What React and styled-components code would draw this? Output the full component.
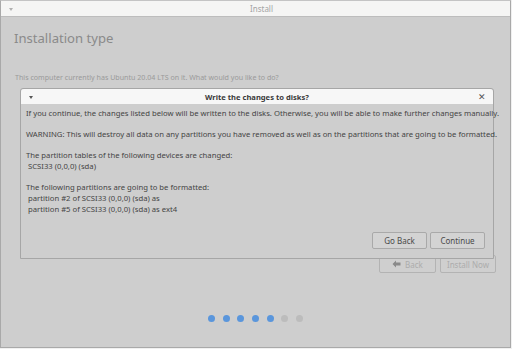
import React from "react";
import styled, { createGlobalStyle } from "styled-components";

const Global = createGlobalStyle`
  html, body { margin: 0; padding: 0; background: #f0f0f0; }
  body { font-family: "Noto Sans", "Open Sans", sans-serif; }
  #root { width: 512px; height: 349px; }
`;

const Window = styled.div`
  position: relative;
  box-sizing: border-box;
  width: 511px;
  height: 348px;
  border: 1px solid #a9a9a9;
  border-top-color: #c4c4c4;
  display: flex;
  flex-direction: column;
  background: #cecece;
  overflow: hidden;
`;

const TitleBar = styled.div`
  height: 15px;
  flex: none;
  background: #f5f5f4;
  border-bottom: 1px solid #bdbdbd;
  display: flex;
  align-items: center;
  justify-content: center;
  padding-left: 12px;
  position: relative;
  font-size: 8px;
  color: #a4a4a4;
`;

const MenuArrow = styled.span`
  position: absolute;
  left: ${(p) => p.$left}px;
  top: 50%;
  margin-top: -1px;
  width: 0;
  height: 0;
  border-left: 2.5px solid transparent;
  border-right: 2.5px solid transparent;
  border-top: 3px solid ${(p) => p.$color};
`;

const Content = styled.div`
  flex: 1;
  display: flex;
  flex-direction: column;
  padding: 0 14px 0 13px;
`;

const Heading = styled.div`
  margin-top: 12px;
  font-size: 13.1px;
  color: #8a8a8a;
  line-height: 18px;
`;

const Question = styled.div`
  margin-top: 25px;
  margin-left: 1px;
  font-size: 7.1px;
  color: #9a9a9a;
  line-height: 11px;
`;

const NavRow = styled.div`
  margin-top: 172px;
  display: flex;
  justify-content: flex-end;
  gap: 4px;
`;

const NavButton = styled.div`
  box-sizing: border-box;
  width: ${(p) => p.$w}px;
  height: 18px;
  border: 1px solid #b3b3b3;
  border-radius: 2px;
  background: #cfcfcf;
  color: #acacac;
  font-size: 8px;
  display: flex;
  align-items: center;
  justify-content: center;
  gap: 4px;
`;

const Dots = styled.div`
  margin-top: 42px;
  display: flex;
  justify-content: center;
  gap: 7.7px;
  padding-left: 1px;
`;

const Dot = styled.span`
  width: 7px;
  height: 7px;
  border-radius: 50%;
  background: ${(p) => (p.$on ? "#5a96dc" : "#bcbcbc")};
`;

const Dialog = styled.div`
  position: absolute;
  left: 19px;
  top: 87px;
  width: 474px;
  height: 171px;
  box-sizing: border-box;
  border: 1px solid #a6a6a6;
  border-radius: 3px 3px 0 0;
  background: #cecece;
  display: flex;
  flex-direction: column;
`;

const DialogHeader = styled.div`
  height: 15px;
  flex: none;
  background: #f7f7f7;
  border-radius: 3px 3px 0 0;
  display: flex;
  align-items: center;
  justify-content: center;
  position: relative;
  font-size: 7.6px;
  font-weight: bold;
  color: #3a3a3a;
`;

const Close = styled.span`
  position: absolute;
  right: 7px;
  top: 0;
  line-height: 15px;
  font-size: 9px;
  font-weight: normal;
  color: #555;
`;

const DialogBody = styled.div`
  flex: 1;
  padding: 4px 5px 0 5px;
  font-size: 7.7px;
  line-height: 11px;
  color: #444444;
  display: flex;
  flex-direction: column;
`;

const Para = styled.div`
  margin-bottom: 10px;
  white-space: pre;
`;

const DialogButtons = styled.div`
  margin-top: auto;
  margin-bottom: 9px;
  display: flex;
  justify-content: flex-end;
  gap: 3px;
  padding-right: 3px;
`;

const DialogButton = styled.div`
  box-sizing: border-box;
  width: 55px;
  height: 17px;
  border: 1px solid #a9a9a9;
  border-radius: 2px;
  background: #d3d3d3;
  color: #4a4a4a;
  font-size: 8px;
  display: flex;
  align-items: center;
  justify-content: center;
`;

const BackArrow = () => (
  <svg width="9" height="8" viewBox="0 0 9 8">
    <path d="M0.5 4 L4 0.5 L4 2.5 L8.5 2.5 L8.5 5.5 L4 5.5 L4 7.5 Z" fill="#8a8a8a" />
  </svg>
);

export default function App() {
  const dots = [true, true, true, true, true, false, false];
  return (
    <>
      <Global />
      <Window>
        <TitleBar>
          <MenuArrow $left={8} $color="#b0b0b0" />
          Install
        </TitleBar>
        <Content>
          <Heading>Installation type</Heading>
          <Question>
            This computer currently has Ubuntu 20.04 LTS on it. What would you like to do?
          </Question>
          <NavRow>
            <NavButton $w={57}>
              <BackArrow />
              Back
            </NavButton>
            <NavButton $w={56}>Install Now</NavButton>
          </NavRow>
          <Dots>
            {dots.map((on, i) => (
              <Dot key={i} $on={on} />
            ))}
          </Dots>
        </Content>
        <Dialog>
          <DialogHeader>
            <MenuArrow $left={8} $color="#555" />
            Write the changes to disks?
            <Close>✕</Close>
          </DialogHeader>
          <DialogBody>
            <Para>
              If you continue, the changes listed below will be written to the disks. Otherwise, you will be able to make further changes manually.
            </Para>
            <Para>
              WARNING: This will destroy all data on any partitions you have removed as well as on the partitions that are going to be formatted.
            </Para>
            <Para>
              {"The partition tables of the following devices are changed:\n SCSI33 (0,0,0) (sda)"}
            </Para>
            <Para>
              {"The following partitions are going to be formatted:\n partition #2 of SCSI33 (0,0,0) (sda) as \n partition #5 of SCSI33 (0,0,0) (sda) as ext4"}
            </Para>
            <DialogButtons>
              <DialogButton>Go Back</DialogButton>
              <DialogButton>Continue</DialogButton>
            </DialogButtons>
          </DialogBody>
        </Dialog>
      </Window>
    </>
  );
}
